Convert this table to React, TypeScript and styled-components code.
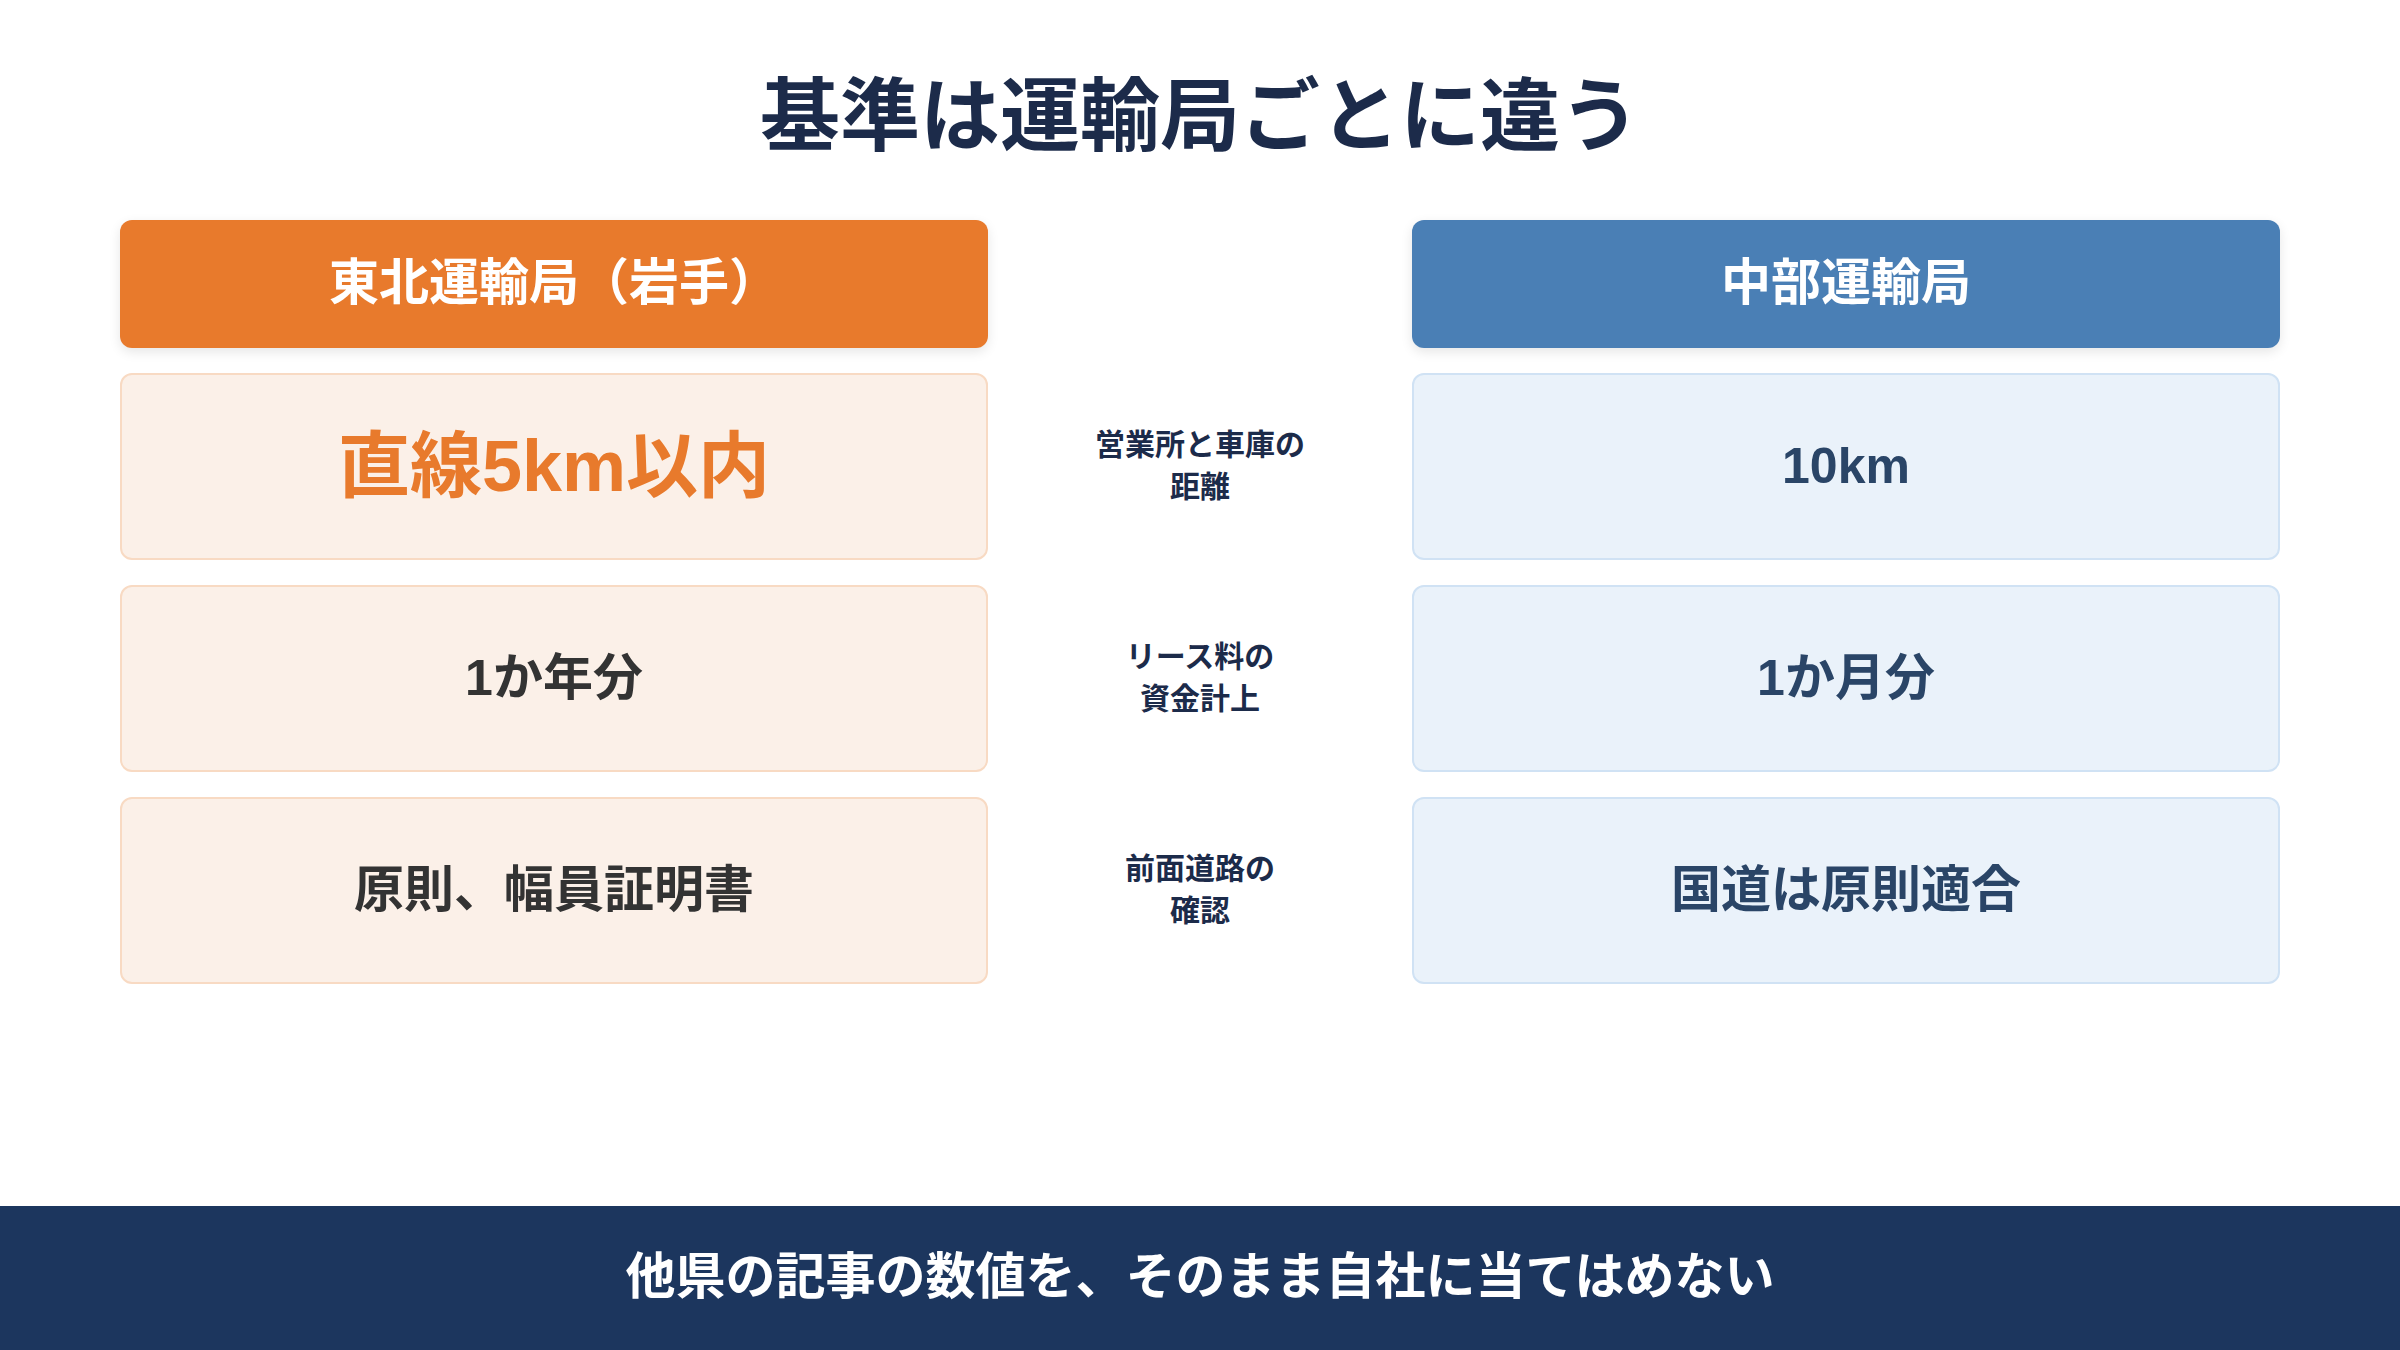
import React from "react";
import styled, { createGlobalStyle } from "styled-components";

const GlobalStyle = createGlobalStyle`
  html, body {
    margin: 0;
    padding: 0;
    background: #ffffff;
  }
  body {
    font-family: "Liberation Sans", "Noto Sans CJK JP", sans-serif;
  }
`;

const Page = styled.div`
  width: 2400px;
  height: 1350px;
  display: flex;
  flex-direction: column;
  background: #ffffff;
  overflow: hidden;
`;

const Title = styled.h1`
  margin: 0;
  padding-top: 69px;
  text-align: center;
  font-size: 80px;
  line-height: 1.2;
  font-weight: 700;
  color: #1c2b4a;
`;

const Grid = styled.div`
  margin-top: 55px;
  padding: 0 120px;
  display: grid;
  grid-template-columns: 1fr 424px 1fr;
  grid-template-rows: 128px repeat(3, 187.5px);
  row-gap: 24.5px;
`;

type Tone = "orange" | "blue";

const HeaderCard = styled.div<{ $tone: Tone }>`
  display: flex;
  align-items: center;
  justify-content: center;
  box-sizing: border-box;
  border-radius: 12px;
  background: ${(p) => (p.$tone === "orange" ? "#e87a2c" : "#4a7fb5")};
  box-shadow: 0 4px 12px rgba(0, 0, 0, 0.1);
  color: #ffffff;
  font-size: 50px;
  line-height: 1.15;
  font-weight: 700;
`;

const ValueCard = styled.div<{ $tone: Tone; $highlight?: boolean }>`
  display: flex;
  align-items: center;
  justify-content: center;
  box-sizing: border-box;
  border-radius: 12px;
  border: 2px solid ${(p) => (p.$tone === "orange" ? "#f8dac3" : "#d0e2f4")};
  background: ${(p) => (p.$tone === "orange" ? "#fbf0e8" : "#eaf2fa")};
  color: ${(p) =>
    p.$highlight ? "#e87a2c" : p.$tone === "orange" ? "#333333" : "#2a4567"};
  font-size: ${(p) => (p.$highlight ? "72px" : "50px")};
  line-height: 1.15;
  font-weight: 700;
`;

const Label = styled.div`
  display: flex;
  align-items: center;
  justify-content: center;
  text-align: center;
  font-size: 30px;
  line-height: 42px;
  font-weight: 700;
  color: #1c2b4a;
`;

const Footer = styled.footer`
  margin-top: auto;
  height: 144px;
  box-sizing: border-box;
  display: flex;
  align-items: center;
  justify-content: center;
  background: #1c365e;
  color: #ffffff;
  font-size: 50px;
  line-height: 1.15;
  font-weight: 700;
`;

const rows = [
  {
    left: "直線5km以内",
    highlight: true,
    label: ["営業所と車庫の", "距離"],
    right: "10km",
  },
  {
    left: "1か年分",
    label: ["リース料の", "資金計上"],
    right: "1か月分",
  },
  {
    left: "原則、幅員証明書",
    label: ["前面道路の", "確認"],
    right: "国道は原則適合",
  },
];

export default function App() {
  return (
    <>
      <GlobalStyle />
      <Page>
        <Title>基準は運輸局ごとに違う</Title>
        <Grid>
          <HeaderCard $tone="orange">東北運輸局（岩手）</HeaderCard>
          <div />
          <HeaderCard $tone="blue">中部運輸局</HeaderCard>
          {rows.map((r, i) => (
            <React.Fragment key={i}>
              <ValueCard $tone="orange" $highlight={r.highlight}>
                {r.left}
              </ValueCard>
              <Label>
                <span>
                  {r.label[0]}
                  <br />
                  {r.label[1]}
                </span>
              </Label>
              <ValueCard $tone="blue">{r.right}</ValueCard>
            </React.Fragment>
          ))}
        </Grid>
        <Footer>他県の記事の数値を、そのまま自社に当てはめない</Footer>
      </Page>
    </>
  );
}
